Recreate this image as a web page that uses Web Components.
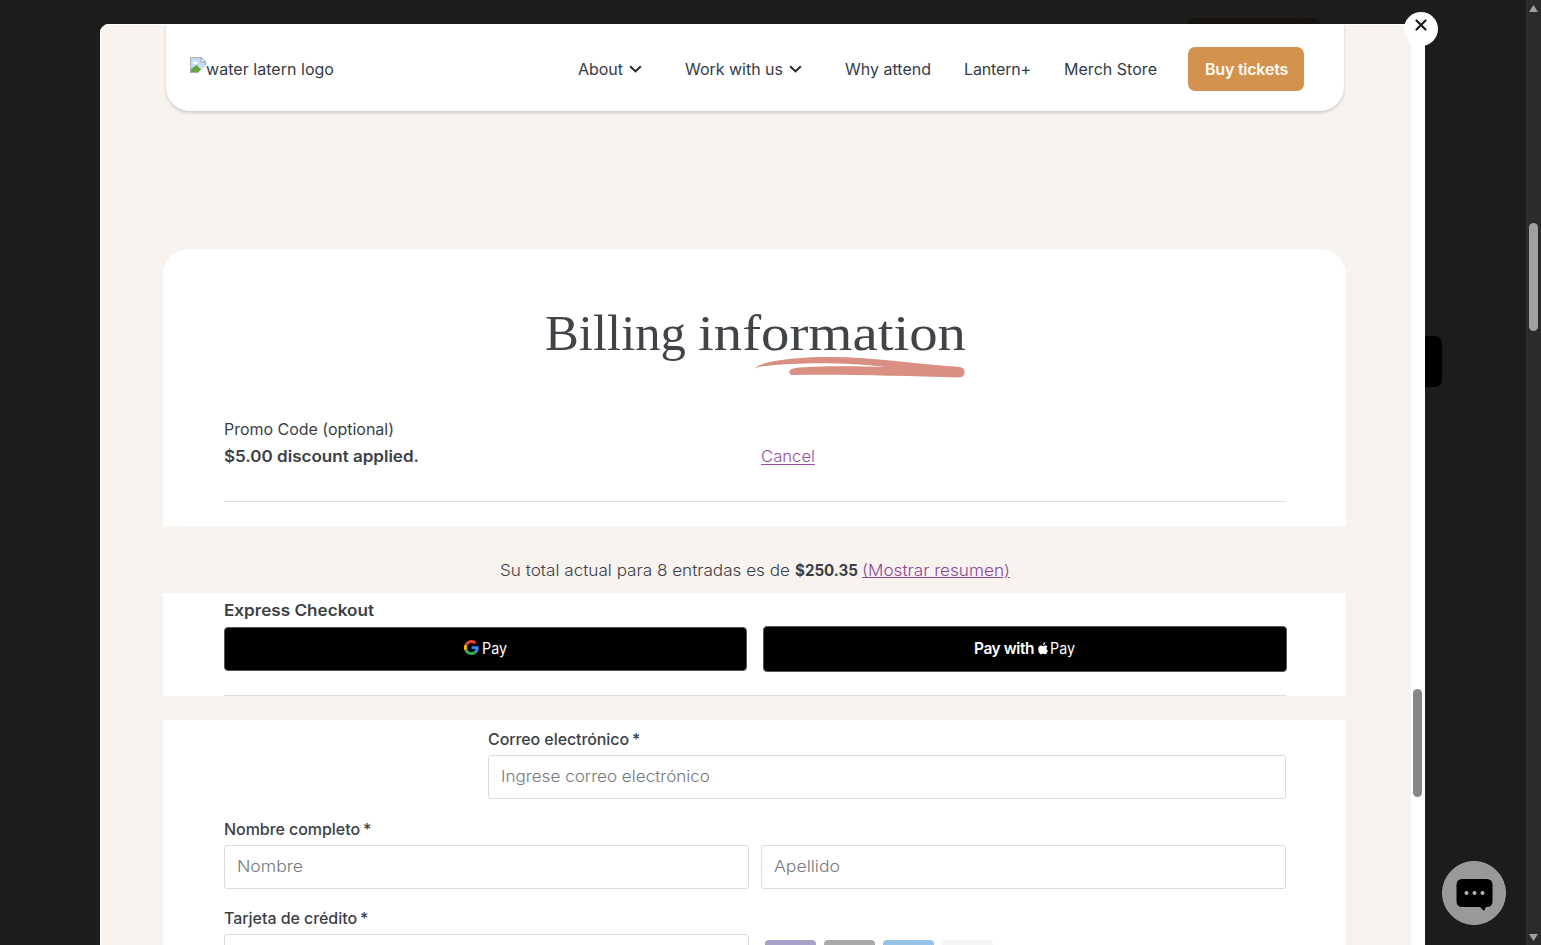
<!DOCTYPE html>
<html lang="es"><head><meta charset="utf-8"><title>Billing information</title>
<style>
html,body{margin:0;height:100%;overflow:hidden;background:#1c1c1c}
body{font-family:Inter,sans-serif;color:#3c3f44;font-size:16px}
</style></head>
<body>
<checkout-app></checkout-app>
<script>
const define=(name,html,after)=>{
  const t=document.createElement('template');t.innerHTML=html;
  customElements.define(name,class extends HTMLElement{
    constructor(){super();this.attachShadow({mode:'open'}).appendChild(t.content.cloneNode(true));}
    connectedCallback(){if(after)after(this,this.shadowRoot);}
  });
};

/* One line of text set to a given measure, by tracking or by widening the letters. */
define('fit-text',`<style>:host{display:inline-block;white-space:nowrap;line-height:inherit;flex:none}span{display:inline-block;transform-origin:0 50%}</style><span><slot></slot></span>`,(el,r)=>{
  const s=r.querySelector('span'),w=+el.getAttribute('w');
  const natural=s.getBoundingClientRect().width;
  el.style.width=w+'px';
  if(el.hasAttribute('wide'))s.style.transform='scaleX('+w/natural+')';
  else s.style.letterSpacing=(w-natural)/el.textContent.length+'px';
});

define('nav-chevron',`<style>:host{display:block;width:13px;height:8px}svg{display:block}</style><svg width="13" height="8" viewBox="0 0 13 8"><path d="M1.2 1.2 6.5 6.4 11.8 1.2" fill="none" stroke="#24292e" stroke-width="2"/></svg>`);

define('broken-image',`<style>:host{display:block;width:16px;height:16px}svg{display:block}</style><svg width="16" height="16" viewBox="0 0 16 16"><path d="M.5.5H11L15.500 5V9L9 15.500H.5Z" fill="#c3dcf3" stroke="#a6adb2"/><path d="M1 15V12L6.500 8 11 12.500 8.500 15Z" fill="#62a744"/><path d="M3 6c0-2 3-2.500 3.500-1 2-.3 2 2 .3 2H4C3.300 7 3 6.500 3 6Z" fill="#fff"/><path d="M11 .5V5H15.500Z" fill="#fff" stroke="#9aa1a6"/><path d="M16 8 8 16H11L16 11Z" fill="#fff"/></svg>`);

define('site-header',`<style>
:host{display:flex;align-items:center;box-sizing:border-box;width:1178px;height:87px;margin-left:66px;padding:3px 40px 0 24px;background:#fff;border-radius:0 0 24px 24px;box-shadow:0 2px 3px rgba(60,50,60,.2);color:#343c47;line-height:24px}
.logo{display:flex;align-items:center;flex:1}broken-image{margin-top:-9px}
nav{display:flex;align-items:center}
nav>div{display:flex;align-items:center;gap:6px}
.a{width:107px}.b{width:160px}.c{margin-right:33px}.d{margin-right:33px}.e{margin-right:31px}
button{font:600 16px/24px Inter,sans-serif;color:#fffaf2;background:#d4924f;border:0;border-radius:7px;width:116px;height:44px;padding:0 0 0 17px;text-align:left}
</style>
<div class="logo"><broken-image></broken-image><fit-text w="128">water latern logo</fit-text></div>
<nav><div class="a"><fit-text w="45">About</fit-text><nav-chevron></nav-chevron></div><div class="b"><fit-text w="98">Work with us</fit-text><nav-chevron></nav-chevron></div><fit-text class="c" w="86">Why attend</fit-text><fit-text class="d" w="67">Lantern+</fit-text><fit-text class="e" w="93">Merch Store</fit-text><button><fit-text w="83">Buy tickets</fit-text></button></nav>`);

define('form-panel',`<style>:host{display:block;box-sizing:border-box;width:1183px;margin-left:63px;padding:0 60px 0 61px;background:#fff}</style><slot></slot>`);

define('script-title',`<style>
:host{display:block;position:relative;width:421px;height:60px;margin:0 auto;white-space:nowrap;font:50px/60px "Liberation Serif",serif;color:#404347}
svg{position:absolute;left:209px;top:53px}
</style><fit-text wide w="141">Billing</fit-text> <fit-text wide w="268">information</fit-text>
<svg width="212" height="24" viewBox="0 0 212 24"><path d="M.5 13C6 6 30 2 68 1 C115 0 160 8 206 11 Q211 12 210.500 17 Q210 22 203 21.500 C150 20 90 18 37 19 Q35 18 35.500 15 Q37 12 45 11.500 C70 10 100 10 132 11 C95 6 40 6 7 10.500 Q2 11.500 .5 13Z" fill="#d98f82"/></svg>`);

define('promo-row',`<style>
:host{display:block;line-height:24px}
.row{display:grid;grid-template-columns:537px 1fr;margin-top:4px;font-size:15.500px}
b{font-weight:600}a{color:#9550a0;font-weight:350;text-decoration:underline;text-underline-offset:2px}
.label{font-weight:420}
hr{border:0;border-top:1px solid #dedede;margin:32px 0 0}
</style><div class="label"><fit-text w="170">Promo Code (optional)</fit-text></div>
<div class="row"><b><fit-text wide w="195">$5.00 discount applied.</fit-text></b><a><fit-text wide w="54"><u>Cancel</u></fit-text></a></div><hr>`);

define('total-line',`<style>:host{display:flex;gap:5px;height:67px;box-sizing:border-box;padding:33px 0 0 400px;line-height:24px;font-size:15.500px;font-weight:350}b{font-weight:650}a{color:#8d4798;margin-left:-1px}</style>
<fit-text wide w="290">Su total actual para 8 entradas es de</fit-text><b><fit-text wide w="63">$250.35</fit-text></b><a><fit-text wide w="148"><u>(Mostrar resumen)</u></fit-text></a>`);

define('pay-buttons',`<style>
:host{display:grid;grid-template-columns:523px 524px;gap:16px;align-items:center;width:1063px;height:46px}
div{display:flex;align-items:center;box-sizing:border-box;background:#000;border:1px solid #555;border-radius:4px;color:#fff;line-height:20px}
.g{height:44px;padding:0 0 2px 239px}.g svg{margin:-1px 3px 0 0}
.p{height:46px;padding-left:210px;font-size:15.500px}.p svg{margin:-1px 2px 0 4px}
.g fit-text{font-size:16.500px;font-weight:400}
.w{font-weight:600}
</style>
<div class="g"><svg width="15" height="15" viewBox="0 0 48 48"><path fill="#ea4335" d="M24 9.500c3.500 0 6.700 1.200 9.200 3.600l6.900-6.900C35.900 2.400 30.500 0 24 0 14.600 0 6.500 5.400 2.600 13.200l8 6.200C12.400 13.700 17.700 9.500 24 9.500z"/><path fill="#4285f4" d="M47 24.500c0-1.600-.2-3.100-.4-4.500H24v9h12.900c-.6 3-2.200 5.500-4.700 7.200l7.700 6C44.400 38 47 31.800 47 24.500z"/><path fill="#fbbc05" d="M10.500 28.600a14.500 14.500 0 0 1 0-9.200l-8-6.200a24 24 0 0 0 0 21.600l8-6.200z"/><path fill="#34a853" d="M24 48c6.500 0 11.900-2.100 15.900-5.800l-7.700-6c-2.200 1.500-4.900 2.300-8.200 2.300-6.300 0-11.600-4.200-13.500-9.900l-8 6.200C6.500 42.600 14.600 48 24 48z"/></svg><fit-text wide w="25">Pay</fit-text></div>
<div class="p"><fit-text class="w" w="60">Pay with</fit-text><svg width="10" height="13" viewBox="0 0 10 13"><path fill="#fff" d="M7.300.2C7.500 1.700 6.300 3 5 3 4.900 1.600 6 .4 7.300.2zM9.500 4.500C8 5.500 8.100 7.900 9.900 8.700 9.300 10.500 8.300 12.200 7.300 12.200c-.8 0-1.100-.5-2.100-.5s-1.400.5-2.100.5C1.700 12.300.2 9.500.2 7.200.2 4.900 1.600 3.600 3.100 3.600c.9 0 1.600.6 2.200.6.500 0 1.400-.7 2.500-.6.700 0 1.300.3 1.700.9z"/></svg><fit-text wide w="25">Pay</fit-text></div>`);

define('form-field',`<style>
:host{display:block}
.l{display:flex;gap:3px;font-weight:450;line-height:24px;height:28px}
.i{box-sizing:border-box;height:44px;border:1px solid #dcdcdc;border-radius:3px;padding:9px 12px;line-height:24px;font-size:15.500px;font-weight:350;color:#77797c;background:#fff}
:host([bare]) .l{display:none}
</style><div class="l"><slot name="label"></slot><span>*</span></div><div class="i"><slot></slot></div>`);

define('card-brands',`<style>:host{display:flex;gap:8px;padding:6px 0 0 4px}i{width:51px;height:32px;border-radius:4px}</style>
<i style="background:#a8a0c8"></i><i style="background:#aaa"></i><i style="background:#98c3e8"></i><i style="background:#f6f6f6"></i>`);

define('billing-fields',`<style>
:host{display:block;padding-top:7px;height:300px}
.email{display:block;margin-left:264px}
.names{display:grid;grid-template-columns:525px 525px;gap:12px;align-items:end;margin-top:18px}
.card{margin-top:17px}card-brands{height:38px}
</style>
<form-field class="email"><fit-text slot="label" w="141">Correo electrónico</fit-text><fit-text wide w="209">Ingrese correo electrónico</fit-text></form-field>
<div class="names"><form-field><fit-text slot="label" w="136">Nombre completo</fit-text><fit-text wide w="66">Nombre</fit-text></form-field><form-field bare><fit-text wide w="66">Apellido</fit-text></form-field></div>
<div class="names card"><form-field><fit-text slot="label" w="133">Tarjeta de crédito</fit-text></form-field><card-brands></card-brands></div>`);

define('scroll-thumb',`<style>:host{display:block;width:9px;height:108px;border-radius:5px;background:var(--thumb,#868686)}</style>`);

define('checkout-dialog',`<style>
:host{display:flex;position:relative;box-sizing:border-box;width:1325px;height:921px;background:#fff;border-radius:9px 0 0 0}
main{width:1311px;height:921px;overflow:hidden;background:#f8f3ef;border-radius:9px 0 0 0;box-shadow:inset 1px 1px #fff}
aside{width:14px;padding:665px 0 0 2px;box-sizing:border-box}
.first{height:277px;margin-top:138px;border-radius:26px 26px 0 0;padding-top:54px}
promo-row{margin-top:54px}
.pay{height:103px;padding-top:6px}
.pay b{display:block;font-weight:600;font-size:15.500px;line-height:24px;height:27px}
.pay hr{border:0;border-top:1px solid #dedede;margin:23px 0 0}
.form{margin-top:24px}
.close{position:absolute;right:-13px;top:-12px;width:34px;height:34px;border-radius:50%;background:#fff}
.close svg{display:block;margin:6px 0 0 9.500px}
</style>
<main><site-header></site-header>
<form-panel class="first"><script-title></script-title><promo-row></promo-row></form-panel>
<total-line></total-line>
<form-panel class="pay"><b><fit-text wide w="150">Express Checkout</fit-text></b><pay-buttons></pay-buttons><hr></form-panel>
<form-panel class="form"><billing-fields></billing-fields></form-panel></main>
<aside><scroll-thumb></scroll-thumb></aside>
<div class="close"><svg width="14" height="14" viewBox="0 0 14 14"><path d="M2.500 2.500l9 9m0-9l-9 9" stroke="#1a1a1a" stroke-width="2.200" stroke-linecap="round"/></svg></div>`);

define('chat-button',`<style>:host{display:block;width:64px;height:64px;box-sizing:border-box;border-radius:50%;background:#999;border:1px solid #a3a3a3;padding:16px 0 0 12.500px}svg{display:block}</style><svg width="37" height="34" viewBox="0 0 37 34"><path d="M6.500 1h24q6 0 6 6v16q0 6-6 6h-.5l-2 4-4-4H6.500q-6 0-6-6V7q0-6 6-6Z"/><g fill="#b5b5b5"><circle cx="10.500" cy="15" r="2"/><circle cx="18.500" cy="15" r="2"/><circle cx="26.500" cy="15" r="2"/></g></svg>`);

define('page-scrollbar',`<style>:host{display:flex;flex-direction:column;justify-content:space-between;box-sizing:border-box;width:15px;height:945px;padding:5px 0 4px 3px;background:#2b2b2b;--thumb:#a0a0a0}scroll-thumb{margin:211px 0 auto}svg{display:block}</style>
<svg width="9" height="7"><path d="M4.500 0 9 7H0Z" fill="#a0a0a0"/></svg><scroll-thumb></scroll-thumb><svg width="9" height="7"><path d="M0 0h9L4.500 7Z" fill="#a0a0a0"/></svg>`);

define('checkout-app',`<style>
:host{display:flex;position:relative;justify-content:space-between;box-sizing:border-box;width:1541px;height:945px;overflow:hidden;background:#1c1c1c}
checkout-dialog{margin:24px 0 0 100px}
.under{position:absolute;background:#000}
.buy{left:1390px;top:336px;width:52px;height:51px;border-radius:7px}
.tab{left:1187px;top:18px;width:133px;height:20px;border-radius:6px;background:#17130f}
.box{left:1300px;top:4px;width:166px;height:406px;border:1px solid #191919;border-radius:6px;background:none}
chat-button{position:absolute;left:1442px;top:861px}
</style><div class="under box"></div><div class="under buy"></div><div class="under tab"></div>
<checkout-dialog></checkout-dialog><page-scrollbar></page-scrollbar><chat-button></chat-button>`);
</script>
</body></html>
